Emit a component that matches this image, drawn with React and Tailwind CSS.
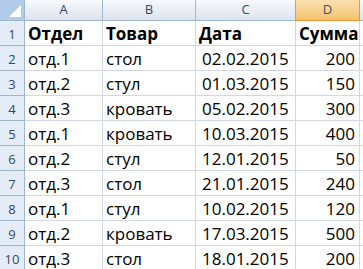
import { Fragment } from 'react';

const cols = ['A', 'B', 'C', 'D'];

const rows = [
  ['Отдел', 'Товар', 'Дата', 'Сумма'],
  ['отд.1', 'стол', '02.02.2015', '200'],
  ['отд.2', 'стул', '01.03.2015', '150'],
  ['отд.3', 'кровать', '05.02.2015', '300'],
  ['отд.1', 'кровать', '10.03.2015', '400'],
  ['отд.2', 'стул', '12.01.2015', '50'],
  ['отд.3', 'стол', '21.01.2015', '240'],
  ['отд.1', 'стул', '10.02.2015', '120'],
  ['отд.2', 'кровать', '17.03.2015', '500'],
  ['отд.3', 'стол', '18.01.2015', '200'],
];

export default function App() {
  return (
    <div
      className="w-[363px] h-[269px] overflow-hidden bg-white"
      style={{ fontFamily: '"Open Sans", "Liberation Sans", sans-serif' }}
    >
      <div className="grid grid-cols-[25px_78px_93px_100px_64px_1fr] auto-rows-[25px] grid-rows-[21px]">
        {/* select-all corner */}
        <div className="relative bg-[#b3cbea] border-r border-b border-[#9eb6ce]">
          <svg className="absolute right-[3px] bottom-[3px]" width="12" height="12" viewBox="0 0 12 12">
            <polygon points="12,0 12,12 0,12" fill="#ffffff" />
          </svg>
        </div>
        {cols.map((c) =>
          c === 'D' ? (
            <div
              key={c}
              className="flex items-center justify-center text-[13px] text-[#3d4f6a] bg-gradient-to-b from-[#fbe1b0] to-[#f2c36a] border-r border-b border-l border-[#f29536] -ml-px"
            >
              {c}
            </div>
          ) : (
            <div
              key={c}
              className="flex items-center justify-center text-[13px] text-[#2f4a6e] bg-gradient-to-b from-[#f7f9fc] to-[#dce4ee] border-r border-b border-[#9eb6ce]"
            >
              {c}
            </div>
          )
        )}
        <div className="bg-gradient-to-b from-[#f7f9fc] to-[#dce4ee] border-b border-[#9eb6ce]" />

        {rows.map((r, i) => (
          <Fragment key={i}>
            <div className="flex items-end justify-center pb-[4px] text-[13px] leading-[13px] text-[#2f4a6e] bg-[#e4ecf7] border-r border-b border-[#9eb6ce]">
              {i + 1}
            </div>
            {r.map((v, j) => (
              <div
                key={j}
                className={`flex items-end pb-[3px] text-[17px] leading-[17px] text-black border-r border-b border-[#d0d7e5] whitespace-nowrap overflow-hidden ${
                  i === 0 ? 'font-bold' : ''
                } ${j === 3 && i > 0 ? 'justify-end pr-[4px]' : j === 2 && i > 0 ? 'pl-[6px]' : 'pl-[3px]'}`}
              >
                {v}
              </div>
            ))}
            <div className="border-b border-[#d0d7e5]" />
          </Fragment>
        ))}
      </div>
    </div>
  );
}
